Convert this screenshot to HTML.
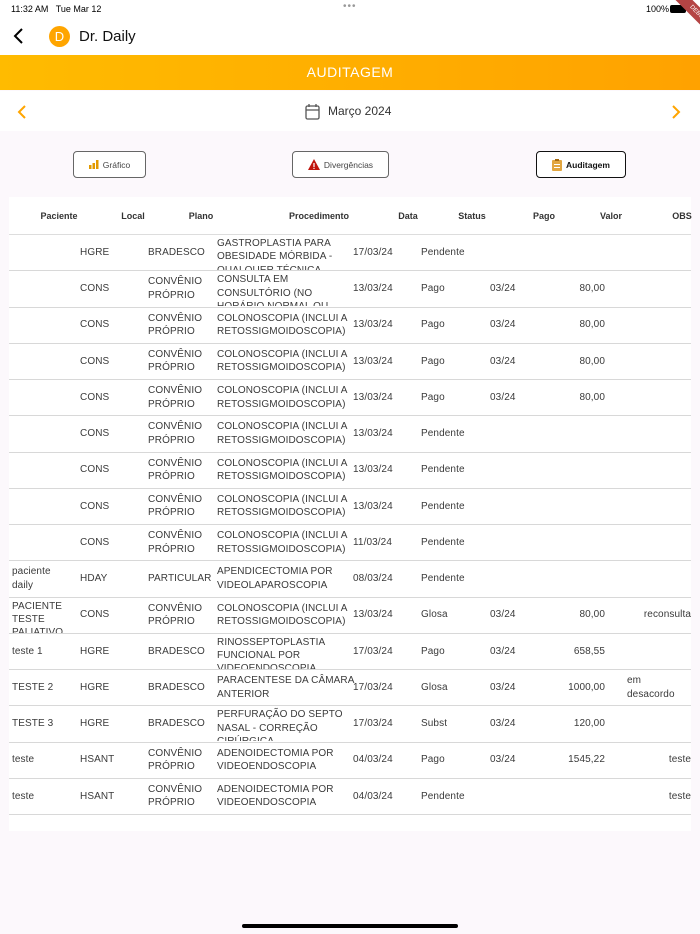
<!DOCTYPE html>
<html><head><meta charset="utf-8"><style>
*{margin:0;padding:0;box-sizing:border-box}
body{width:700px;height:934px;background:#fcf8fc;font-family:"Liberation Sans",sans-serif;position:relative;overflow:hidden;color:#333}
.a{position:absolute}
.hdr{top:0;left:0;width:700px;height:55px;background:#fff}
.bar{top:55px;left:0;width:700px;height:35px;background:linear-gradient(90deg,#ffbb00,#ffa200);color:#fff;font-size:14px;letter-spacing:.5px;text-align:center;line-height:35px}
.month{top:91px;left:0;width:700px;height:40px;background:#fff}
.btn{position:absolute;top:151px;height:27px;border:1.3px solid #666;border-radius:4px;background:#fff;font-size:8.5px;display:flex;align-items:center;justify-content:center;gap:4px;color:#444}
.tbl{left:9px;top:197px;width:682px;height:634px;background:#fff}
.th{position:absolute;top:0;height:38px;line-height:38px;font-size:9px;font-weight:bold;color:#333;text-align:center}
.r{position:absolute;left:0;width:682px;height:36.25px;border-bottom:1px solid #d8d8d8}
.c{position:absolute;top:0;height:35px;display:flex;align-items:center;font-size:10px;line-height:13.3px;color:#3a3a3a;overflow:hidden;letter-spacing:.1px}
.t{align-items:flex-start;padding-top:2px}
.c0{left:3px;width:62px}.c1{left:71px;width:62px}.c2{left:139px;width:66px}.c3{left:208px;width:138px}.c4{left:344px;width:60px}.c5{left:412px;width:60px}.c6{left:481px;width:60px}.c7{left:530px;width:66px;justify-content:flex-end}.c8{left:618px;width:64px;justify-content:flex-end}
</style></head><body>
<div class="a hdr">
<div class="a" style="left:11px;top:4px;font-size:9px;color:#000">11:32 AM&nbsp;&nbsp; Tue Mar 12</div>
<div class="a" style="left:343px;top:1px;font-size:10px;color:#999;letter-spacing:1px">•••</div>
<div class="a" style="left:646px;top:4px;font-size:9px;color:#000">100%</div>
<div class="a" style="left:670px;top:5px;width:16px;height:8px;background:#000;border-radius:2px"></div>
<div class="a" style="left:668px;top:8px;width:60px;height:12px;background:#b54444;transform:rotate(45deg);color:#fff;font-size:6px;text-align:center;line-height:12px">DEBUG</div>
<svg class="a" style="left:13px;top:27px" width="12" height="18"><path d="M9 2 L2 9 L9 16" stroke="#000" stroke-width="2" fill="none"/></svg>
<div class="a" style="left:49px;top:26px;width:21px;height:21px;border-radius:50%;background:#ffa500;color:#fff;font-size:13px;text-align:center;line-height:21px">D</div>
<div class="a" style="left:79px;top:28px;font-size:15px;color:#111">Dr. Daily</div>
</div>
<div class="a bar">AUDITAGEM</div>
<div class="a month">
<svg class="a" style="left:16px;top:13px" width="12" height="16"><path d="M9 2 L3 8 L9 14" stroke="#ffa500" stroke-width="2" fill="none"/></svg>
<svg class="a" style="left:670px;top:13px" width="12" height="16"><path d="M3 2 L9 8 L3 14" stroke="#ffa500" stroke-width="2" fill="none"/></svg>
<svg class="a" style="left:305px;top:12px" width="15" height="17"><rect x="1" y="3" width="13" height="13" rx="1.5" stroke="#555" stroke-width="1.3" fill="none"/><path d="M1 7 H14 M4 1 V4 M11 1 V4" stroke="#555" stroke-width="1.3"/></svg>
<div class="a" style="left:328px;top:13px;font-size:12px;color:#333">Março 2024</div>
</div>
<div class="btn" style="left:73px;width:73px"><svg width="10" height="9"><rect x="0" y="5" width="2.5" height="4" fill="#e29a00"/><rect x="3.5" y="3" width="2.5" height="6" fill="#e29a00"/><rect x="7" y="0" width="2.5" height="9" fill="#e29a00"/></svg>Gráfico</div>
<div class="btn" style="left:292px;width:97px"><svg width="12" height="11"><path d="M6 0 L12 11 H0 Z" fill="#c0140c"/><rect x="5.4" y="4" width="1.2" height="4" fill="#fff"/><rect x="5.4" y="8.8" width="1.2" height="1.2" fill="#fff"/></svg>Divergências</div>
<div class="btn" style="left:536px;width:90px;border-color:#111;font-weight:bold;color:#111"><svg width="10" height="12"><rect x="0" y="1" width="10" height="11" rx="1" fill="#e2a640"/><rect x="3" y="0" width="4" height="2" fill="#a56a10"/><rect x="2" y="5" width="6" height="1" fill="#fff"/><rect x="2" y="8" width="6" height="1" fill="#fff"/></svg>Auditagem</div>
<div class="a tbl">
<div class="th" style="left:20px;width:60px">Paciente</div>
<div class="th" style="left:104px;width:40px">Local</div>
<div class="th" style="left:172px;width:40px">Plano</div>
<div class="th" style="left:270px;width:80px">Procedimento</div>
<div class="th" style="left:379px;width:40px">Data</div>
<div class="th" style="left:443px;width:40px">Status</div>
<div class="th" style="left:515px;width:40px">Pago</div>
<div class="th" style="left:582px;width:40px">Valor</div>
<div class="th" style="left:658px;width:30px">OBS</div>
<div class="a" style="left:0;top:37px;width:682px;height:1px;background:#ddd"></div>

<div class="r" style="top:38px"><div class="c c1">HGRE</div><div class="c c2">BRADESCO</div><div class="c c3 t">GASTROPLASTIA PARA OBESIDADE MÓRBIDA - QUALQUER TÉCNICA</div><div class="c c4">17/03/24</div><div class="c c5">Pendente</div></div>
<div class="r" style="top:74.25px"><div class="c c1">CONS</div><div class="c c2">CONVÊNIO PRÓPRIO</div><div class="c c3 t">CONSULTA EM CONSULTÓRIO (NO HORÁRIO NORMAL OU</div><div class="c c4">13/03/24</div><div class="c c5">Pago</div><div class="c c6">03/24</div><div class="c c7">80,00</div></div>
<div class="r" style="top:110.5px"><div class="c c1">CONS</div><div class="c c2">CONVÊNIO PRÓPRIO</div><div class="c c3">COLONOSCOPIA (INCLUI A RETOSSIGMOIDOSCOPIA)</div><div class="c c4">13/03/24</div><div class="c c5">Pago</div><div class="c c6">03/24</div><div class="c c7">80,00</div></div>
<div class="r" style="top:146.75px"><div class="c c1">CONS</div><div class="c c2">CONVÊNIO PRÓPRIO</div><div class="c c3">COLONOSCOPIA (INCLUI A RETOSSIGMOIDOSCOPIA)</div><div class="c c4">13/03/24</div><div class="c c5">Pago</div><div class="c c6">03/24</div><div class="c c7">80,00</div></div>
<div class="r" style="top:183px"><div class="c c1">CONS</div><div class="c c2">CONVÊNIO PRÓPRIO</div><div class="c c3">COLONOSCOPIA (INCLUI A RETOSSIGMOIDOSCOPIA)</div><div class="c c4">13/03/24</div><div class="c c5">Pago</div><div class="c c6">03/24</div><div class="c c7">80,00</div></div>
<div class="r" style="top:219.25px"><div class="c c1">CONS</div><div class="c c2">CONVÊNIO PRÓPRIO</div><div class="c c3">COLONOSCOPIA (INCLUI A RETOSSIGMOIDOSCOPIA)</div><div class="c c4">13/03/24</div><div class="c c5">Pendente</div></div>
<div class="r" style="top:255.5px"><div class="c c1">CONS</div><div class="c c2">CONVÊNIO PRÓPRIO</div><div class="c c3">COLONOSCOPIA (INCLUI A RETOSSIGMOIDOSCOPIA)</div><div class="c c4">13/03/24</div><div class="c c5">Pendente</div></div>
<div class="r" style="top:291.75px"><div class="c c1">CONS</div><div class="c c2">CONVÊNIO PRÓPRIO</div><div class="c c3">COLONOSCOPIA (INCLUI A RETOSSIGMOIDOSCOPIA)</div><div class="c c4">13/03/24</div><div class="c c5">Pendente</div></div>
<div class="r" style="top:328px"><div class="c c1">CONS</div><div class="c c2">CONVÊNIO PRÓPRIO</div><div class="c c3">COLONOSCOPIA (INCLUI A RETOSSIGMOIDOSCOPIA)</div><div class="c c4">11/03/24</div><div class="c c5">Pendente</div></div>
<div class="r" style="top:364.25px"><div class="c c0">paciente daily</div><div class="c c1">HDAY</div><div class="c c2">PARTICULAR</div><div class="c c3">APENDICECTOMIA POR VIDEOLAPAROSCOPIA</div><div class="c c4">08/03/24</div><div class="c c5">Pendente</div></div>
<div class="r" style="top:400.5px"><div class="c c0 t">PACIENTE TESTE PALIATIVO</div><div class="c c1">CONS</div><div class="c c2">CONVÊNIO PRÓPRIO</div><div class="c c3">COLONOSCOPIA (INCLUI A RETOSSIGMOIDOSCOPIA)</div><div class="c c4">13/03/24</div><div class="c c5">Glosa</div><div class="c c6">03/24</div><div class="c c7">80,00</div><div class="c c8">reconsulta</div></div>
<div class="r" style="top:436.75px"><div class="c c0">teste 1</div><div class="c c1">HGRE</div><div class="c c2">BRADESCO</div><div class="c c3 t">RINOSSEPTOPLASTIA FUNCIONAL POR VIDEOENDOSCOPIA</div><div class="c c4">17/03/24</div><div class="c c5">Pago</div><div class="c c6">03/24</div><div class="c c7">658,55</div></div>
<div class="r" style="top:473px"><div class="c c0">TESTE 2</div><div class="c c1">HGRE</div><div class="c c2">BRADESCO</div><div class="c c3">PARACENTESE DA CÂMARA<br>ANTERIOR</div><div class="c c4">17/03/24</div><div class="c c5">Glosa</div><div class="c c6">03/24</div><div class="c c7">1000,00</div><div class="c c8" style="justify-content:flex-start">em desacordo</div></div>
<div class="r" style="top:509.25px"><div class="c c0">TESTE 3</div><div class="c c1">HGRE</div><div class="c c2">BRADESCO</div><div class="c c3 t">PERFURAÇÃO DO SEPTO NASAL - CORREÇÃO CIRÚRGICA</div><div class="c c4">17/03/24</div><div class="c c5">Subst</div><div class="c c6">03/24</div><div class="c c7">120,00</div></div>
<div class="r" style="top:545.5px"><div class="c c0">teste</div><div class="c c1">HSANT</div><div class="c c2">CONVÊNIO PRÓPRIO</div><div class="c c3">ADENOIDECTOMIA POR VIDEOENDOSCOPIA</div><div class="c c4">04/03/24</div><div class="c c5">Pago</div><div class="c c6">03/24</div><div class="c c7">1545,22</div><div class="c c8">teste</div></div>
<div class="r" style="top:581.75px"><div class="c c0">teste</div><div class="c c1">HSANT</div><div class="c c2">CONVÊNIO PRÓPRIO</div><div class="c c3">ADENOIDECTOMIA POR VIDEOENDOSCOPIA</div><div class="c c4">04/03/24</div><div class="c c5">Pendente</div><div class="c c8">teste</div></div>
</div>
<div class="a" style="left:242px;top:924px;width:216px;height:4px;border-radius:2px;background:#000"></div>
</body></html>
